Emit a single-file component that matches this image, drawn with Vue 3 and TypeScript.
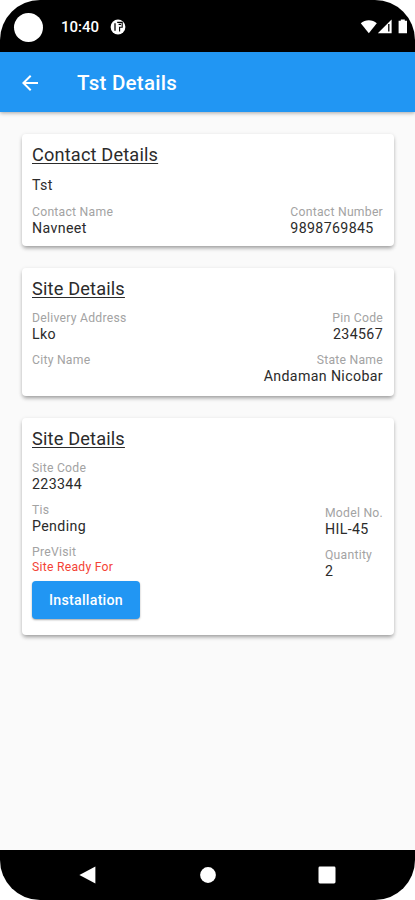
<script setup lang="ts">
interface Field {
  label: string
  value: string
  tone?: string
}

const contact: Field[] = [
  { label: 'Contact Name', value: 'Navneet' },
  { label: 'Contact Number', value: '9898769845' },
]

const addressLeft: Field[] = [
  { label: 'Delivery Address', value: 'Lko' },
  { label: 'City Name', value: '' },
]

const addressRight: Field[] = [
  { label: 'Pin Code', value: '234567' },
  { label: 'State Name', value: 'Andaman Nicobar' },
]

const siteLeft: Field[] = [
  { label: 'Site Code', value: '223344' },
  { label: 'Tis', value: 'Pending' },
  { label: 'PreVisit', value: 'Site Ready For', tone: 'alert' },
]

const siteRight: Field[] = [
  { label: 'Model No.', value: 'HIL-45' },
  { label: 'Quantity', value: '2' },
]
</script>

<template>
  <div class="phone">
    <header class="status">
      <span class="camera"></span>
      <span class="clock">10:40</span>
      <svg class="app-icon" viewBox="0 0 16 16">
        <circle cx="8" cy="8" r="7.4" fill="#fff" />
        <path d="M5 4.2v7.6" fill="none" stroke="#000" stroke-width="1.3" />
        <path d="M7.2 3.4h5v4.8H9.6v4.4" fill="none" stroke="#000" stroke-width="1.1" />
        <path d="M8.6 5.4h2.4" fill="none" stroke="#000" stroke-width="1.4" />
      </svg>
      <svg class="signals" viewBox="0 0 48 16">
        <path d="M.8 4.2C5 .1 12.6.1 16.8 4.2L8.8 14.2Z" fill="#fff" />
        <path d="M31.6.4V14.2H17.8Z" fill="#fff" />
        <path d="M28.8 5v7.4" stroke="#000" stroke-width="1.3" />
        <path d="M38.6 1.8h2.2V.4h4v1.4H47v12.4h-8.4Z" fill="#fff" />
      </svg>
    </header>

    <div class="appbar">
      <svg class="back" viewBox="0 0 24 24">
        <path d="M20 11H7.83l5.59-5.59L12 4l-8 8 8 8 1.41-1.41L7.83 13H20v-2z" fill="#fff" />
      </svg>
      <h1>Tst Details</h1>
    </div>

    <main class="content">
      <section class="card">
        <h2>Contact Details</h2>
        <p class="value name">Tst</p>
        <div class="columns">
          <div v-for="f in contact" :key="f.label" class="field">
            <span class="label">{{ f.label }}</span>
            <span class="value">{{ f.value }}</span>
          </div>
        </div>
      </section>

      <section class="card">
        <h2>Site Details</h2>
        <div class="columns address">
          <div class="column">
            <div v-for="f in addressLeft" :key="f.label" class="field">
              <span class="label">{{ f.label }}</span>
              <span class="value">{{ f.value }}</span>
            </div>
          </div>
          <div class="column end">
            <div v-for="f in addressRight" :key="f.label" class="field">
              <span class="label">{{ f.label }}</span>
              <span class="value">{{ f.value }}</span>
            </div>
          </div>
        </div>
      </section>

      <section class="card site">
        <h2>Site Details</h2>
        <div class="columns address">
          <div class="column">
            <div v-for="f in siteLeft" :key="f.label" class="field">
              <span class="label">{{ f.label }}</span>
              <span class="value" :class="f.tone">{{ f.value }}</span>
            </div>
            <button type="button" class="install">Installation</button>
          </div>
          <div class="column middle">
            <div v-for="f in siteRight" :key="f.label" class="field">
              <span class="label">{{ f.label }}</span>
              <span class="value">{{ f.value }}</span>
            </div>
          </div>
        </div>
      </section>
    </main>

    <nav class="navbar">
      <svg viewBox="0 0 18 18"><path d="M.4 9 16.4.4V17.6Z" fill="#fff" /></svg>
      <svg viewBox="0 0 18 18"><circle cx="9" cy="9" r="7.9" fill="#fff" /></svg>
      <svg viewBox="0 0 18 18"><rect x=".5" y=".5" width="17" height="17" rx="1.4" fill="#fff" /></svg>
    </nav>
  </div>
</template>

<style>
body {
  background: #fff;
}
</style>

<style scoped>
.phone {
  display: flex;
  flex-direction: column;
  width: 415px;
  height: 900px;
  overflow: hidden;
  border-radius: 40px;
  background: #fafafa;
  font-family: Roboto, "Liberation Sans", sans-serif;
}

.status {
  display: flex;
  align-items: center;
  flex: none;
  box-sizing: border-box;
  height: 52px;
  padding: 2px 7px 0 14px;
  background: #000;
  color: #fff;
}

.camera {
  width: 29px;
  height: 29px;
  border-radius: 50%;
  background: #fff;
}

.clock {
  margin-left: 18px;
  width: 38px;
  font-size: 15px;
  font-weight: 500;
  white-space: nowrap;
}

.app-icon {
  width: 16px;
  height: 16px;
  margin-left: 11px;
}

.signals {
  width: 48px;
  height: 16px;
  margin-left: auto;
}

.appbar {
  display: flex;
  align-items: center;
  flex: none;
  box-sizing: border-box;
  height: 60px;
  padding: 1px 18px 0;
  background: #2196f3;
  box-shadow: 0 1px 4px rgba(0, 0, 0, 0.35);
}

.back {
  width: 24px;
  height: 24px;
}

h1 {
  margin: 0 0 0 35px;
  color: #fff;
  font-size: 20.5px;
  font-weight: 500;
  line-height: 24px;
  letter-spacing: 0.25px;
}

.content {
  display: flex;
  flex: 1;
  flex-direction: column;
  gap: 22px;
  padding: 22px 21px 0 22px;
}

.card {
  box-sizing: border-box;
  height: 112px;
  padding: 9px 11px 0 10px;
  border-radius: 4px;
  background: #fff;
  box-shadow: 0 3px 4px -1px rgba(0, 0, 0, 0.32), 0 1px 4px rgba(0, 0, 0, 0.12);
}

.card + .card {
  height: 128px;
}

.card.site {
  height: 217px;
}

h2 {
  margin: 0;
  color: #2b2b2b;
  font-size: 18.2px;
  font-weight: 400;
  line-height: 24px;
  letter-spacing: 0.16px;
  text-decoration: underline;
  text-decoration-thickness: 1px;
  text-underline-offset: 2px;
}

.name {
  margin: 9px 0 11px;
}

.columns {
  display: flex;
  justify-content: space-between;
}

.address {
  margin-top: 10px;
}

.column {
  display: flex;
  flex-direction: column;
  gap: 10px;
}

.field {
  display: flex;
  flex-direction: column;
}

.end {
  text-align: right;
}

.middle {
  margin-top: 45px;
}

.label {
  height: 14px;
  color: #a3a3a3;
  font-size: 12.2px;
  line-height: 14px;
  letter-spacing: 0.25px;
}

.value {
  height: 18px;
  color: #2b2b2b;
  font-size: 14.2px;
  line-height: 18px;
  letter-spacing: 0.36px;
}

.alert {
  color: #f44336;
  font-size: 12.2px;
  line-height: 16px;
  letter-spacing: 0.25px;
}

.install {
  width: 108px;
  height: 38px;
  margin-top: -6px;
  padding: 0;
  border: 0;
  border-radius: 4px;
  background: #2196f3;
  box-shadow: 0 1px 2px rgba(0, 0, 0, 0.35);
  color: #fff;
  font: 500 14.2px/38px Roboto, "Liberation Sans", sans-serif;
  letter-spacing: 0.27px;
}

.navbar {
  display: flex;
  align-items: center;
  justify-content: space-between;
  flex: none;
  box-sizing: border-box;
  height: 50px;
  padding: 0 79px;
  background: #000;
}

.navbar svg {
  width: 18px;
  height: 18px;
}
</style>
